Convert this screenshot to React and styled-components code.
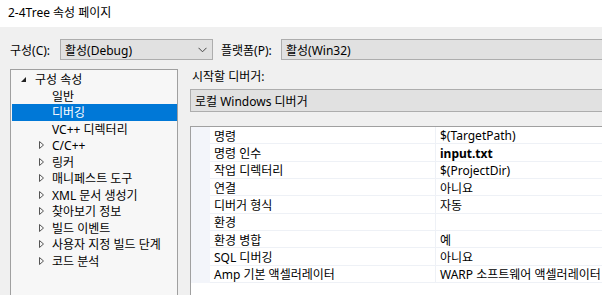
import React from "react";
import styled, { createGlobalStyle } from "styled-components";

const GlobalStyle = createGlobalStyle`
  html, body {
    margin: 0;
    padding: 0;
    overflow: hidden;
    background: #f0f0f0;
  }
  body {
    font-family: "Noto Sans", "Noto Sans CJK KR", sans-serif;
    font-size: 12px;
    color: #000;
  }
`;

const Window = styled.div`
  width: 602px;
  height: 295px;
  display: flex;
  flex-direction: column;
  overflow: hidden;
  background: #f0f0f0;
`;

const TitleBar = styled.div`
  height: 27px;
  flex: none;
  background: #fff;
  display: flex;
  align-items: center;
  padding-left: 8px;
  padding-bottom: 4px;
  box-sizing: border-box;
  font-size: 12px;
`;

const TopBar = styled.div`
  display: flex;
  align-items: center;
  padding: 12px 0 0 10px;
  height: 21px;
  flex: none;
  white-space: nowrap;
`;

const Label = styled.span`
  width: ${(p) => p.width}px;
  flex: none;
`;

const Combo = styled.div`
  box-sizing: border-box;
  height: 21px;
  width: ${(p) => (p.width ? `${p.width}px` : "auto")};
  flex: ${(p) => (p.width ? "none" : "1")};
  background: #e1e1e1;
  border: 1px solid #adadad;
  display: flex;
  align-items: center;
  padding-left: 4px;
  padding-right: 5px;
  margin-right: ${(p) => p.gap || 0}px;
`;

const ComboText = styled.span`
  flex: 1;
`;

const Main = styled.div`
  display: flex;
  flex: 1;
  padding: 9px 0 0 10px;
  min-height: 0;
`;

const Tree = styled.div`
  box-sizing: border-box;
  width: 168px;
  flex: none;
  border: 1px solid #a0a0a0;
  border-bottom: none;
  background: #f7f7f7;
  padding: 1px 0 0 1px;
`;

const TreeRow = styled.div`
  height: 16.5px;
  display: flex;
  align-items: center;
  padding-left: ${(p) => p.indent}px;
  background: ${(p) => (p.selected ? "#0078d7" : "transparent")};
  color: ${(p) => (p.selected ? "#fff" : "#000")};
  white-space: nowrap;
`;

const Arrow = styled.span`
  width: ${(p) => p.w}px;
  flex: none;
  display: flex;
  align-items: center;
`;

const Right = styled.div`
  flex: 1;
  display: flex;
  flex-direction: column;
  padding-left: 12px;
  min-width: 0;
`;

const SectionLabel = styled.div`
  height: 14px;
  flex: none;
  display: flex;
  align-items: center;
  padding-left: 2px;
`;

const DebuggerBox = styled(Combo)`
  flex: none;
  height: 23px;
  margin-top: 6px;
  margin-right: -20px;
`;

const Grid = styled.div`
  margin-top: 14px;
  flex: 1;
  border-top: 1px solid #a0a0a0;
  border-left: 1px solid #a0a0a0;
  background: #fff;
  margin-right: -20px;
`;

const GridRow = styled.div`
  display: flex;
  height: 17.33px;
`;

const Gutter = styled.div`
  width: 19px;
  flex: none;
  background: #f3f5fa;
`;

const Cell = styled.div`
  box-sizing: border-box;
  display: flex;
  align-items: center;
  border-bottom: 1px solid #eef1f6;
  width: ${(p) => (p.width ? `${p.width}px` : "auto")};
  flex: ${(p) => (p.width ? "none" : "1")};
  padding-left: 4px;
  padding-top: 1px;
  border-left: ${(p) => (p.sep ? "1px solid #eef1f6" : "none")};
  font-weight: ${(p) => (p.bold ? 700 : 400)};
  white-space: nowrap;
`;

const Chevron = () => (
  <svg width="9" height="6" viewBox="0 0 9 6">
    <polyline points="0.5,0.8 4.5,4.8 8.5,0.8" fill="none" stroke="#444" strokeWidth="1" />
  </svg>
);

const Expanded = () => (
  <svg width="5" height="5" viewBox="0 0 5 5">
    <polygon points="5,0 5,5 0,5" fill="#222" />
  </svg>
);

const Collapsed = () => (
  <svg width="5" height="8" viewBox="0 0 5 8">
    <polygon points="0.5,0.5 4.5,4 0.5,7.5" fill="none" stroke="#555" strokeWidth="1" />
  </svg>
);

const treeItems = [
  { label: "구성 속성", level: 0, expanded: true },
  { label: "일반", level: 1 },
  { label: "디버깅", level: 1, selected: true },
  { label: "VC++ 디렉터리", level: 1 },
  { label: "C/C++", level: 1, collapsed: true },
  { label: "링커", level: 1, collapsed: true },
  { label: "매니페스트 도구", level: 1, collapsed: true },
  { label: "XML 문서 생성기", level: 1, collapsed: true },
  { label: "찾아보기 정보", level: 1, collapsed: true },
  { label: "빌드 이벤트", level: 1, collapsed: true },
  { label: "사용자 지정 빌드 단계", level: 1, collapsed: true },
  { label: "코드 분석", level: 1, collapsed: true },
];

const props = [
  ["명령", "$(TargetPath)"],
  ["명령 인수", "input.txt", true],
  ["작업 디렉터리", "$(ProjectDir)"],
  ["연결", "아니요"],
  ["디버거 형식", "자동"],
  ["환경", ""],
  ["환경 병합", "예"],
  ["SQL 디버깅", "아니요"],
  ["Amp 기본 액셀러레이터", "WARP 소프트웨어 액셀러레이터"],
];

export default function App() {
  return (
    <Window>
      <GlobalStyle />
      <TitleBar>2-4Tree 속성 페이지</TitleBar>
      <TopBar>
        <Label width={50}>구성(C):</Label>
        <Combo width={153} gap={8}>
          <ComboText>활성(Debug)</ComboText>
          <Chevron />
        </Combo>
        <Label width={60}>플랫폼(P):</Label>
        <Combo gap={-20}>
          <ComboText>활성(Win32)</ComboText>
        </Combo>
      </TopBar>
      <Main>
        <Tree>
          {treeItems.map((it) => (
            <TreeRow key={it.label} indent={it.level === 0 ? 9 : 27} selected={it.selected}>
              {it.level === 0 ? (
                <Arrow w={14}>
                  <Expanded />
                </Arrow>
              ) : (
                <Arrow w={13}>{it.collapsed ? <Collapsed /> : null}</Arrow>
              )}
              {it.label}
            </TreeRow>
          ))}
        </Tree>
        <Right>
          <SectionLabel>시작할 디버거:</SectionLabel>
          <DebuggerBox>
            <ComboText>로컬 Windows 디버거</ComboText>
          </DebuggerBox>
          <Grid>
            {props.map(([name, value, bold]) => (
              <GridRow key={name}>
                <Gutter />
                <Cell width={225}>{name}</Cell>
                <Cell sep bold={bold}>
                  {value}
                </Cell>
              </GridRow>
            ))}
          </Grid>
        </Right>
      </Main>
    </Window>
  );
}
